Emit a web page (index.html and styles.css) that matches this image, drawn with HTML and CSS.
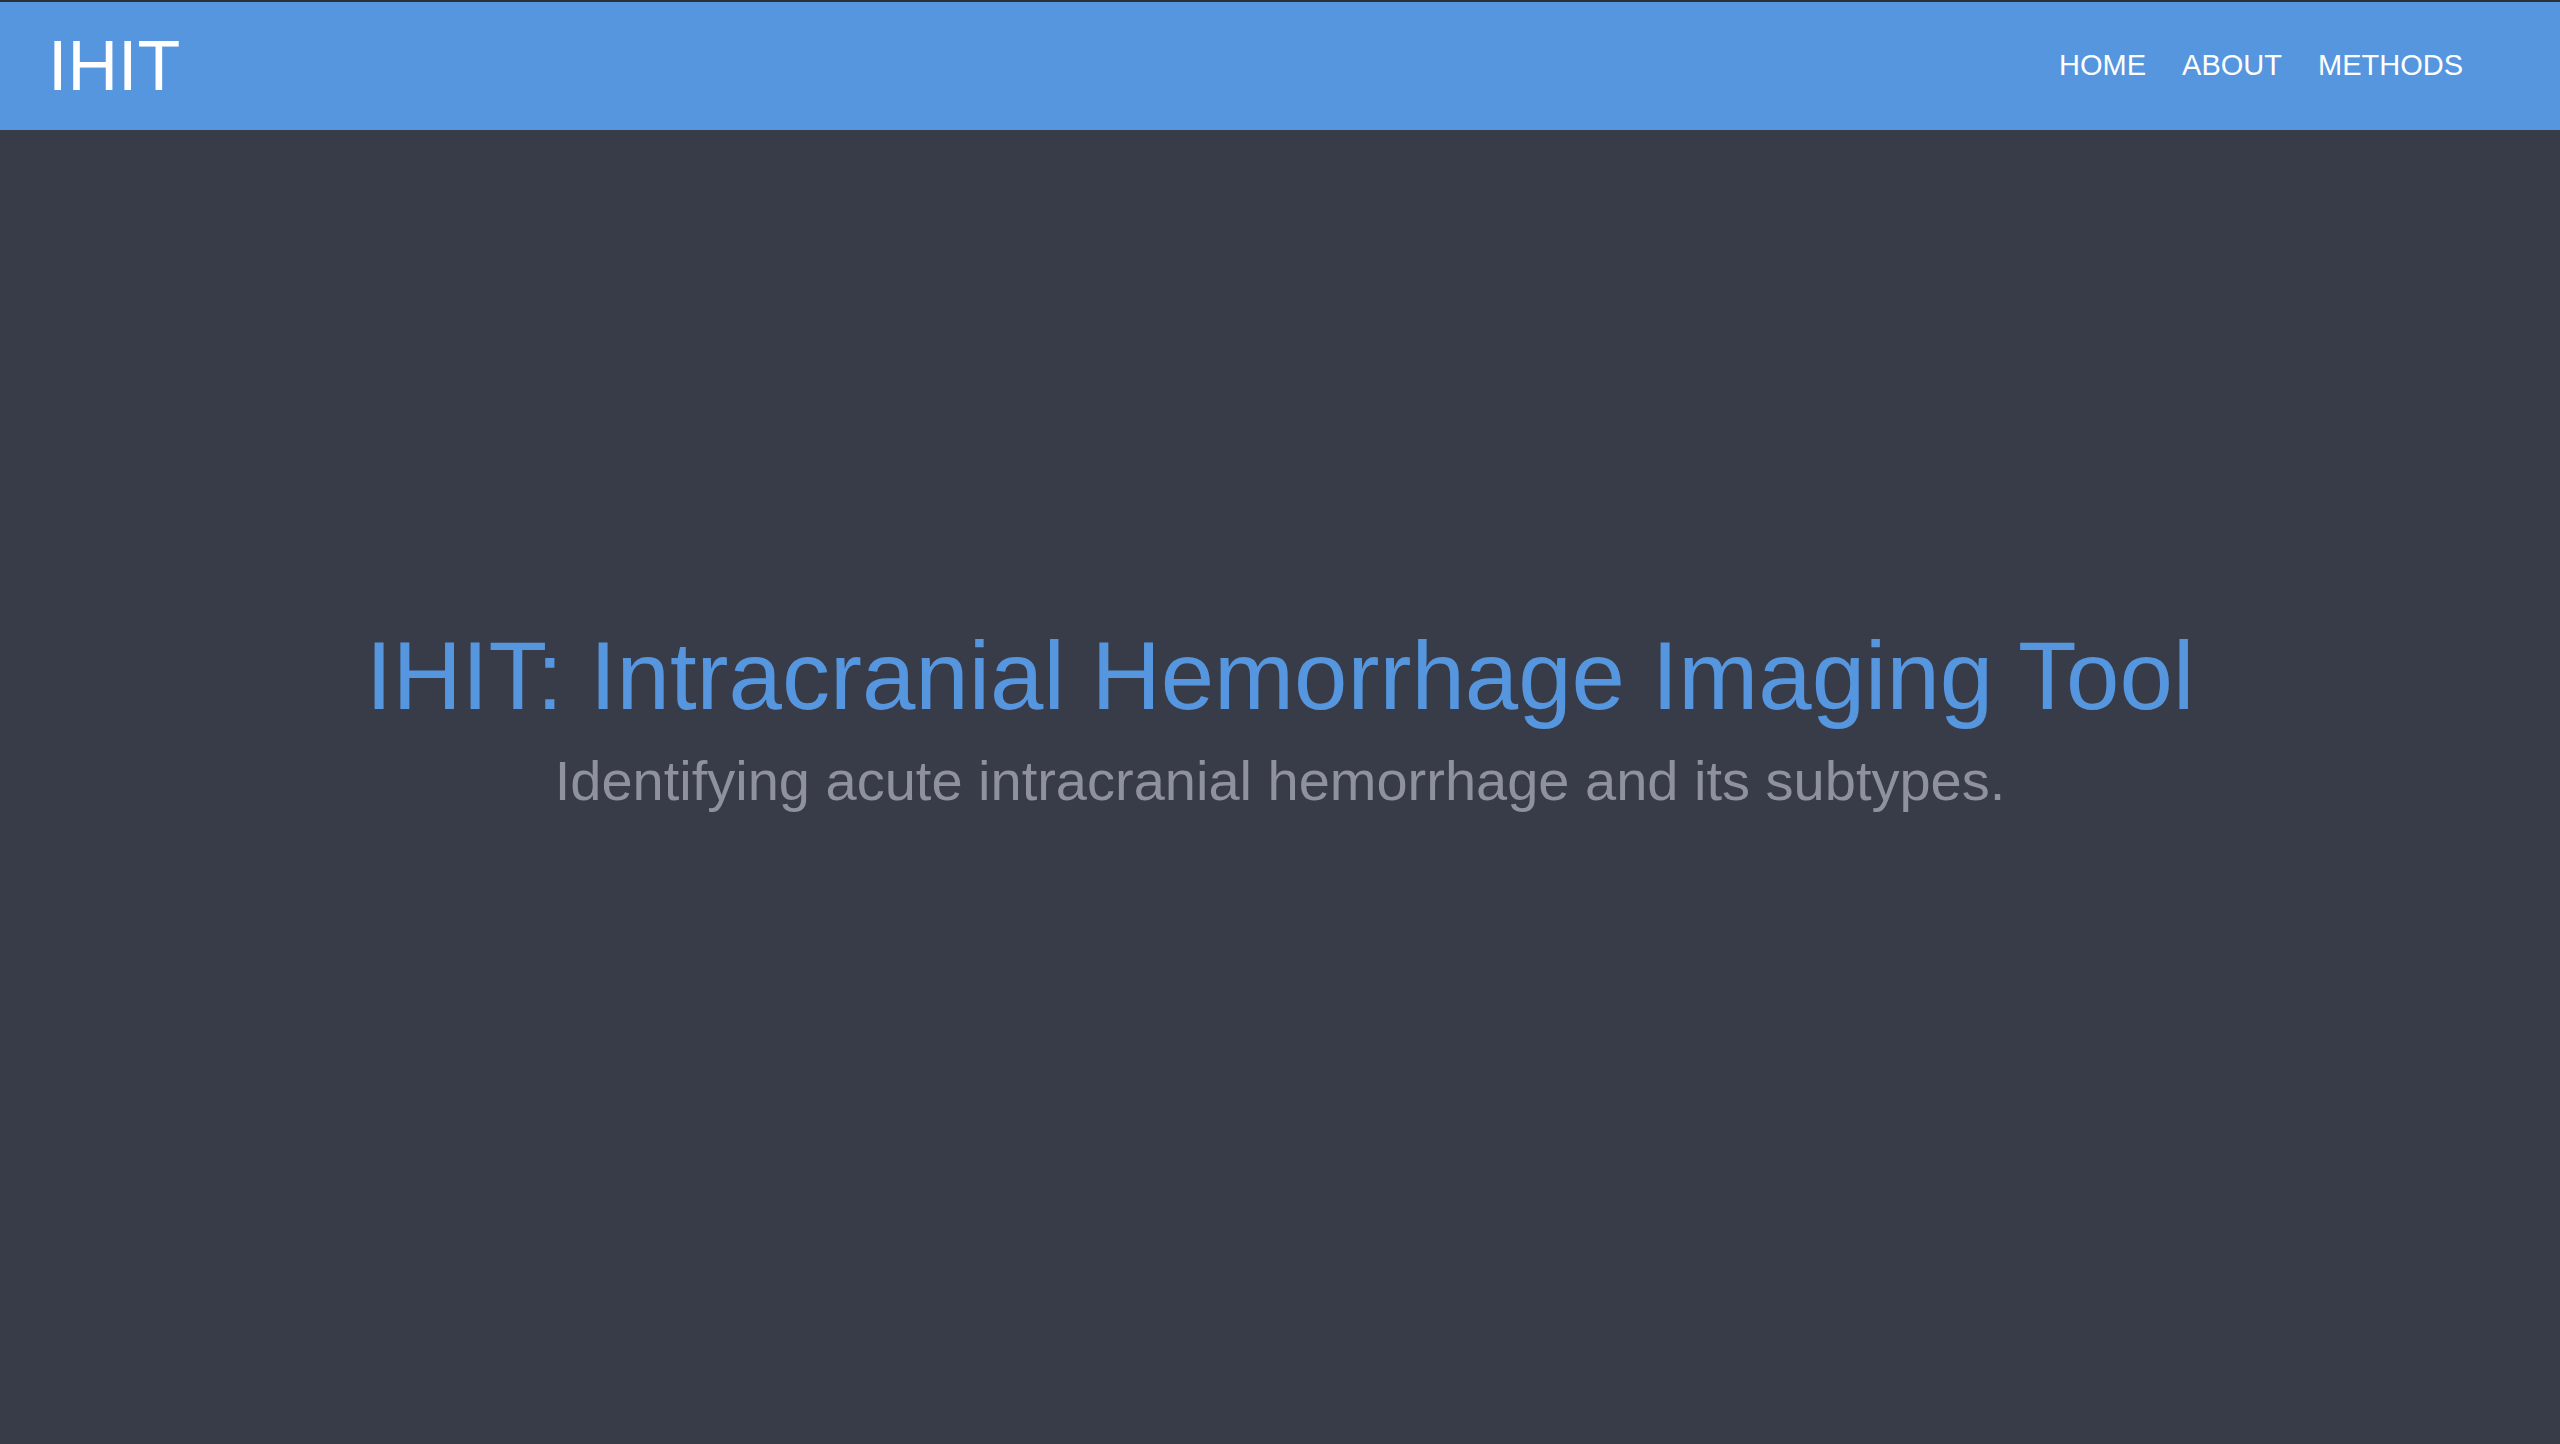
FILE: index.html
```html
<!DOCTYPE html>
<html lang="en">
<head>
<meta charset="utf-8">
<title>IHIT</title>
<link rel="stylesheet" href="styles.css">
</head>
<body>
<header class="topbar">
  <a class="brand" href="#">IHIT</a>
  <nav class="nav">
    <a class="nav-link" href="#">HOME</a>
    <a class="nav-link" href="#">ABOUT</a>
    <a class="nav-link" href="#">METHODS</a>
  </nav>
</header>
<main class="hero">
  <h1 class="hero-title">IHIT: Intracranial Hemorrhage Imaging Tool</h1>
  <p class="hero-sub">Identifying acute intracranial hemorrhage and its subtypes.</p>
</main>
</body>
</html>
```

FILE: styles.css
```css
html, body {
  margin: 0;
  padding: 0;
  height: 100%;
}
body {
  background: #383b48;
  font-family: "Liberation Sans", Arial, Helvetica, sans-serif;
  border-top: 2px solid #2e3038;
  box-sizing: border-box;
}
.topbar {
  height: 128px;
  background: #5596de;
  display: flex;
  align-items: center;
  justify-content: space-between;
  padding: 0 97px 0 48px;
}
.brand {
  color: #ffffff;
  text-decoration: none;
  font-size: 70px;
  line-height: 1.15;
}
.nav {
  display: flex;
  gap: 36px;
}
.nav-link {
  color: #ffffff;
  text-decoration: none;
  font-size: 29px;
  line-height: 1.15;
}
.hero {
  padding-top: 491px;
  text-align: center;
}
.hero-title {
  margin: 0;
  font-weight: normal;
  font-size: 96px;
  line-height: 1.15;
  color: #5596de;
}
.hero-sub {
  margin: 18px 0 0;
  font-size: 56px;
  line-height: 1.15;
  color: #8f929c;
}
```
